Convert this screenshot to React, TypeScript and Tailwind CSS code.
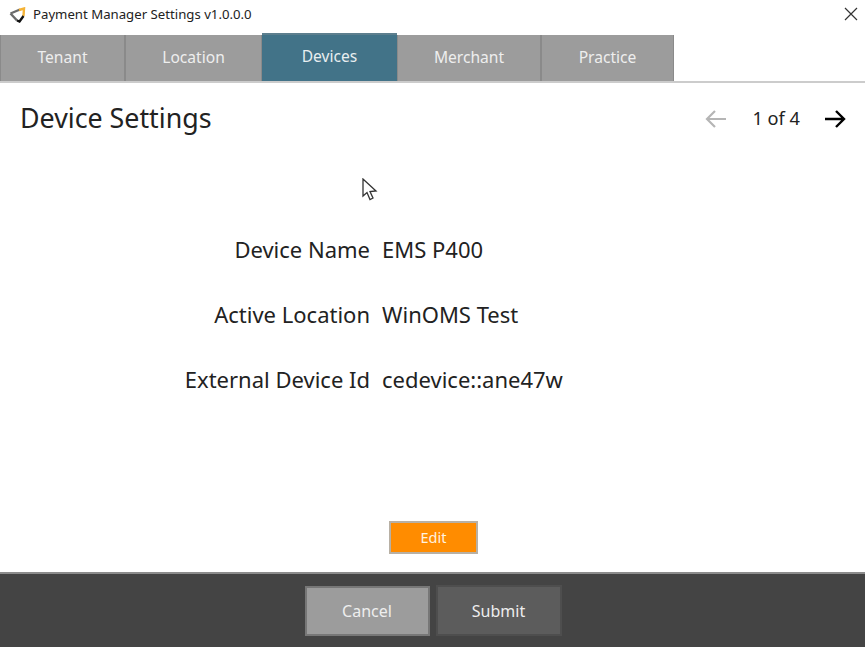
const font = "font-['Noto_Sans','Open_Sans',sans-serif]";

function Tab({ label, width, active }: { label: string; width: string; active?: boolean }) {
  return (
    <div
      className={
        active
          ? `${width} h-[48px] shrink-0 flex items-center justify-center bg-[#427388] border-t-2 border-[#5d7f8e] text-[15.6px] text-[#e8eef0]`
          : `${width} h-[46px] shrink-0 flex items-center justify-center bg-[#9c9c9c] border border-[#8a8a8a] border-b-0 border-t-0 text-[15.6px] text-[#eeeeee]`
      }
    >
      <span className={active ? "-mt-[2px]" : ""}>{label}</span>
    </div>
  );
}

function Row({ label, value }: { label: string; value: string }) {
  return (
    <div className="h-[65px] flex items-center gap-3 text-[22px] text-[#222222]">
      <div className="w-[370px] text-right">{label}</div>
      <div>{value}</div>
    </div>
  );
}

export default function App() {
  return (
    <div className={`${font} w-[865px] h-[647px] bg-white flex flex-col overflow-hidden relative`}>
      <div className="h-[35px] flex items-center pl-[9px] pr-[7px] shrink-0">
        <svg width="17" height="17" viewBox="0 0 17 17" className="mr-[7px] -mt-[5px]" fill="none" strokeWidth="2.4">
          <path d="M1.5 6.5 L11 2.5 M1.5 6.5 L8 13.5" stroke="#6b6b6b" />
          <path d="M10 3 L15 1.5 L14.5 9" stroke="#f5b335" />
          <path d="M14.5 9 L10.5 14.5 L8 13.5" stroke="#111111" />
        </svg>
        <span className="text-[13.2px] text-[#222222] -mt-[5px]">Payment Manager Settings v1.0.0.0</span>
        <svg width="14" height="14" viewBox="0 0 14 14" className="ml-auto -mt-[7px]" stroke="#333333" strokeWidth="1.2">
          <path d="M1 1 L13 13 M13 1 L1 13" />
        </svg>
      </div>

      <div className="h-[48px] flex items-end border-b-2 border-[#cccccc] shrink-0">
        <Tab label="Tenant" width="w-[125px]" />
        <Tab label="Location" width="w-[137px]" />
        <Tab label="Devices" width="w-[135px]" active />
        <Tab label="Merchant" width="w-[144px]" />
        <Tab label="Practice" width="w-[133px]" />
      </div>

      <div className="flex-1 flex flex-col">
        <div className="h-[70px] pl-[20px] pr-[19px] flex items-center">
          <h1 className="text-[26.8px] font-normal text-[#222222]">Device Settings</h1>
          <div className="ml-auto mt-[2px] flex items-center text-[18.2px] text-[#222222]">
            <svg width="21" height="20" viewBox="0 0 21 20" fill="none" stroke="#b5b5b5" strokeWidth="2.2">
              <path d="M21 10 H2 M10 2 L2 10 L10 18" />
            </svg>
            <span className="ml-[26px] mr-[25px]">1 of 4</span>
            <svg width="21" height="20" viewBox="0 0 21 20" fill="none" stroke="#000000" strokeWidth="2.4">
              <path d="M0 10 H19 M11 2 L19 10 L11 18" />
            </svg>
          </div>
        </div>

        <div className="mt-[64px]">
          <Row label="Device Name" value="EMS P400" />
          <Row label="Active Location" value="WinOMS Test" />
          <Row label="External Device Id" value="cedevice::ane47w" />
        </div>

        <div className="flex justify-center mt-[109px] pl-[2px]">
          <button className="w-[89px] h-[33px] bg-[#ff8c00] border-2 border-[#b8b0a4] text-[14.5px] text-[#fff2e0]">Edit</button>
        </div>
      </div>

      <div className="h-[75px] bg-[#444444] border-t-2 border-[#8c8c8c] flex justify-center items-center gap-[6px] shrink-0 pl-[1px]">
        <button className="w-[125px] h-[50px] bg-[#9c9c9c] border-2 border-[#777777] text-[16px] text-[#eeeeee]">Cancel</button>
        <button className="w-[126px] h-[51px] bg-[#5c5c5c] border-2 border-[#4e4e4e] text-[16px] text-[#eeeeee]">Submit</button>
      </div>

      <svg width="16" height="24" viewBox="0 0 16 24" className="absolute left-[362px] top-[178px]" fill="#ffffff" stroke="#333333" strokeWidth="1.3">
        <path d="M1 1 L1 18 L5 14.5 L8 21.5 L11 20 L8 13.5 L14 13 Z" />
      </svg>
    </div>
  );
}
